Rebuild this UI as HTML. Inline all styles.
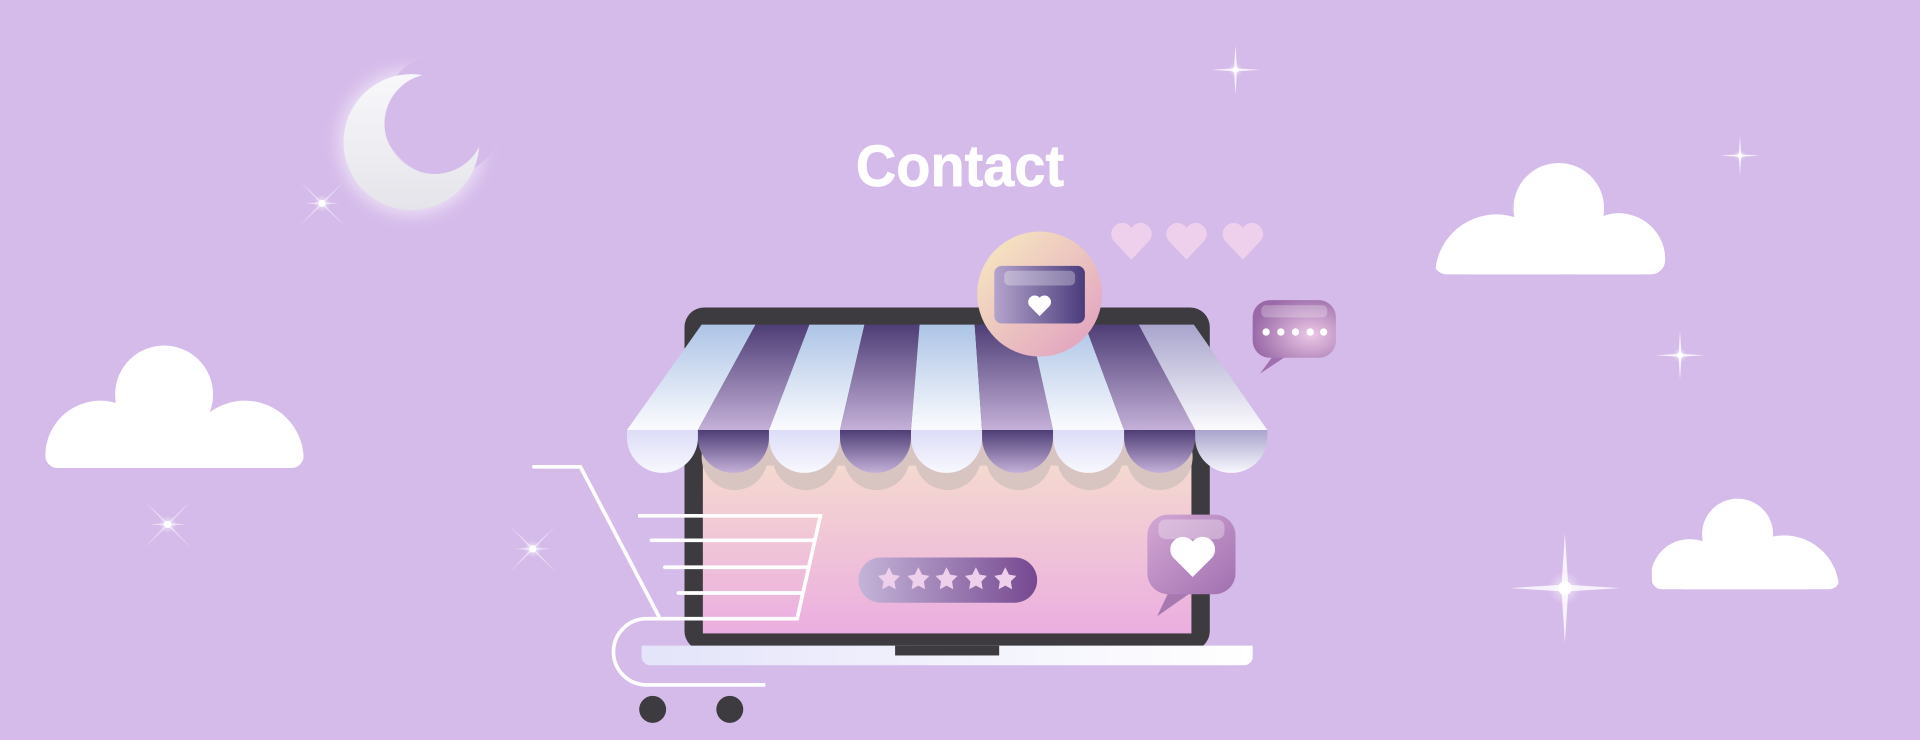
<!DOCTYPE html>
<html><head><meta charset="utf-8"><style>
html,body{margin:0;padding:0;background:#d5bbea;overflow:hidden}
svg{display:block}
</style></head><body>
<svg width="1920" height="740" viewBox="0 0 1568 604" preserveAspectRatio="none" xmlns="http://www.w3.org/2000/svg">
<defs>
<linearGradient id="lt" x1="0" y1="0" x2="0" y2="1"><stop offset="0" stop-color="#adc4e6"/><stop offset="1" stop-color="#fbfbfe"/></linearGradient>
<linearGradient id="lt2" x1="0" y1="0" x2="0" y2="1"><stop offset="0" stop-color="#a8a4cc"/><stop offset="1" stop-color="#fbfbfe"/></linearGradient>
<linearGradient id="dk" x1="0" y1="0" x2="0" y2="1"><stop offset="0" stop-color="#4e3e76"/><stop offset="1" stop-color="#c4b0d8"/></linearGradient>
<linearGradient id="ls" x1="0" y1="0" x2="0" y2="1"><stop offset="0" stop-color="#dcdcf8"/><stop offset="1" stop-color="#f8f8fe"/></linearGradient>
<linearGradient id="ls2" x1="0" y1="0" x2="0" y2="1"><stop offset="0" stop-color="#a8a4cc"/><stop offset="1" stop-color="#f8f8fe"/></linearGradient>
<linearGradient id="ds" x1="0" y1="0" x2="0" y2="1"><stop offset="0" stop-color="#4e3e76"/><stop offset="1" stop-color="#c4b0d8"/></linearGradient>
<linearGradient id="scr" x1="0" y1="0" x2="0" y2="1"><stop offset="0" stop-color="#f7e2cc"/><stop offset="1" stop-color="#ebaee0"/></linearGradient>
<linearGradient id="base" x1="0" y1="0" x2="1" y2="0"><stop offset="0" stop-color="#e4e4fa"/><stop offset="1" stop-color="#ffffff"/></linearGradient>
<linearGradient id="badge" x1="0" y1="0" x2="1" y2="1"><stop offset="0" stop-color="#f8ecc0"/><stop offset="1" stop-color="#e09cc0"/></linearGradient>
<linearGradient id="card" x1="0" y1="0" x2="1" y2="0"><stop offset="0" stop-color="#b4a4cc"/><stop offset="1" stop-color="#4a3c7c"/></linearGradient>
<linearGradient id="pill" x1="0" y1="0" x2="1" y2="0"><stop offset="0" stop-color="#c4b4d8"/><stop offset="1" stop-color="#764890"/></linearGradient>
<radialGradient id="bub" cx="0.7" cy="0.6" r="0.7"><stop offset="0" stop-color="#ecc8e6"/><stop offset="1" stop-color="#9a6aa8"/></radialGradient>
<linearGradient id="bub2" x1="0" y1="0" x2="1" y2="1"><stop offset="0" stop-color="#d4a8d4"/><stop offset="1" stop-color="#a070b0"/></linearGradient>
<linearGradient id="moon" x1="0" y1="0" x2="0" y2="1"><stop offset="0" stop-color="#f8f8fb"/><stop offset="1" stop-color="#e4e4ea"/></linearGradient>
<radialGradient id="glow"><stop offset="0" stop-color="#fff" stop-opacity="0.6"/><stop offset="1" stop-color="#fff" stop-opacity="0"/></radialGradient>
<filter id="bl"><feGaussianBlur stdDeviation="6"/></filter>
<mask id="mm"><rect width="1568" height="604" fill="#fff"/><circle cx="355" cy="101" r="41" fill="#000"/></mask>
<mask id="mg"><rect width="1568" height="604" fill="#fff"/><circle cx="362" cy="94" r="50" fill="#000"/></mask>
<clipPath id="c1"><rect x="37" y="250" width="211" height="132" rx="10"/></clipPath>
<clipPath id="c2"><rect x="1170" y="120" width="190" height="104" rx="12"/></clipPath>
<clipPath id="c3"><rect x="1349" y="400" width="153" height="81" rx="8"/></clipPath>
<symbol id="sp" viewBox="-20 -20 40 40"><circle r="6" fill="url(#glow)"/><path d="M0-20L1.2-1.2 20 0 1.2 1.2 0 20-1.2 1.2-20 0-1.2-1.2Z" fill="#fff" opacity="0.8"/><circle r="2.5" fill="#fff"/></symbol>
<symbol id="spx" viewBox="-20 -20 40 40"><circle r="6" fill="url(#glow)"/><path d="M-16-16L0-1 16-16 1 0 16 16 0 1-16 16-1 0Z" fill="#fff" opacity="0.45"/><path d="M-12 0L0-1 12 0 0 1Z" fill="#fff" opacity="0.5"/><circle r="2.5" fill="#fff"/></symbol>
</defs>
<rect width="1568" height="604" fill="#d5bbea"/>

<!-- moon -->
<circle cx="336" cy="116" r="60" fill="#fff" opacity="0.5" filter="url(#bl)" mask="url(#mg)"/>
<circle cx="336" cy="116" r="55.5" fill="url(#moon)" mask="url(#mm)"/>

<!-- sparkles -->
<use href="#spx" x="240" y="143" width="46" height="46"/>
<use href="#spx" x="113" y="404" width="48" height="48"/>
<use href="#spx" x="411" y="424" width="48" height="48"/>
<use href="#sp" x="989" y="37" width="40" height="40"/>
<use href="#sp" x="1405" y="111" width="32" height="32"/>
<use href="#sp" x="1352" y="270" width="40" height="40"/>
<use href="#sp" x="1233" y="435" width="90" height="90"/>

<!-- clouds -->
<g fill="#fff">
<g clip-path="url(#c1)"><circle cx="134" cy="322" r="40"/><circle cx="82" cy="372" r="45"/><circle cx="200" cy="375" r="48"/><rect x="70" y="355" width="160" height="30"/></g>
<g clip-path="url(#c2)"><circle cx="1273" cy="170" r="37"/><circle cx="1222" cy="225" r="50"/><circle cx="1322" cy="212" r="38"/><rect x="1200" y="198" width="140" height="30"/></g>
<g clip-path="url(#c3)"><circle cx="1419" cy="436" r="29"/><circle cx="1380" cy="472" r="32"/><circle cx="1457" cy="482" r="45"/><rect x="1375" y="462" width="100" height="22"/></g>
</g>

<!-- title -->
<text x="699" y="152" textLength="170" lengthAdjust="spacingAndGlyphs" font-family="Liberation Sans, sans-serif" font-weight="bold" font-size="48" fill="#fff" stroke="#fff" stroke-width="0.6">Contact</text>

<!-- hearts -->
<g fill="#efd0ec">
<path d="M924 212L909 196A8.5 8.5 0 0 1 924 186A8.5 8.5 0 0 1 939 196Z"/>
<path d="M969 212L954 196A8.5 8.5 0 0 1 969 186A8.5 8.5 0 0 1 984 196Z"/>
<path d="M1015 212L1000 196A8.5 8.5 0 0 1 1015 186A8.5 8.5 0 0 1 1030 196Z"/>
</g>

<!-- laptop -->
<rect x="559" y="251" width="429" height="280" rx="16" fill="#3d3b40"/>
<rect x="574" y="350" width="399" height="167" fill="url(#scr)"/>
<g fill="#d8c4c0">
<rect x="574" y="350" width="399" height="30"/>
<circle cx="600" cy="373" r="27"/><circle cx="658" cy="373" r="27"/><circle cx="716" cy="373" r="27"/><circle cx="774" cy="373" r="27"/><circle cx="832" cy="373" r="27"/><circle cx="890" cy="373" r="27"/><circle cx="947" cy="373" r="27"/>
</g>
<path d="M524 527H1023V536A7 7 0 0 1 1016 543H531A7 7 0 0 1 524 536Z" fill="url(#base)"/>
<rect x="731" y="527" width="85" height="8" fill="#3d3b40"/>

<!-- awning -->
<path d="M573 265L617 265 570 351 512 351Z" fill="url(#lt)"/>
<path d="M617 265L661 265 628 351 570 351Z" fill="url(#dk)"/>
<path d="M661 265L706 265 686 351 628 351Z" fill="url(#lt)"/>
<path d="M706 265L751 265 744 351 686 351Z" fill="url(#dk)"/>
<path d="M751 265L796 265 802 351 744 351Z" fill="url(#lt)"/>
<path d="M796 265L841 265 860 351 802 351Z" fill="url(#dk)"/>
<path d="M841 265L886 265 918 351 860 351Z" fill="url(#lt)"/>
<path d="M886 265L930 265 976 351 918 351Z" fill="url(#dk)"/>
<path d="M930 265L975 265 1035 351 976 351Z" fill="url(#lt2)"/>
<path d="M512 351H570V357A29 29 0 0 1 512 357Z" fill="url(#ls)"/>
<path d="M570 351H628V357A29 29 0 0 1 570 357Z" fill="url(#ds)"/>
<path d="M628 351H686V357A29 29 0 0 1 628 357Z" fill="url(#ls)"/>
<path d="M686 351H744V357A29 29 0 0 1 686 357Z" fill="url(#ds)"/>
<path d="M744 351H802V357A29 29 0 0 1 744 357Z" fill="url(#ls)"/>
<path d="M802 351H860V357A29 29 0 0 1 802 357Z" fill="url(#ds)"/>
<path d="M860 351H918V357A29 29 0 0 1 860 357Z" fill="url(#ls)"/>
<path d="M918 351H976V357A29 29 0 0 1 918 357Z" fill="url(#ds)"/>
<path d="M976 351H1035V357A29.5 29 0 0 1 976 357Z" fill="url(#ls2)"/>

<!-- badge -->
<circle cx="849" cy="240" r="51" fill="url(#badge)"/>
<rect x="812" y="217" width="74" height="47" rx="6" fill="url(#card)"/>
<rect x="820" y="221" width="58" height="12" rx="4" fill="#fff" opacity="0.3"/>
<path d="M849 258L841 250A4.5 4.5 0 0 1 849 243A4.5 4.5 0 0 1 857 250Z" fill="#fff"/>

<!-- chat bubble -->
<path d="M1040 290L1029 305 1050 291Z" fill="#a070b0"/>
<rect x="1023" y="245" width="68" height="47" rx="14" fill="url(#bub)"/>
<rect x="1030" y="249" width="54" height="10" rx="4" fill="#fff" opacity="0.25"/>
<g fill="#fff"><circle cx="1034" cy="271" r="3"/><circle cx="1046" cy="271" r="3"/><circle cx="1058" cy="271" r="3"/><circle cx="1070" cy="271" r="3"/><circle cx="1081" cy="271" r="3"/></g>

<!-- heart bubble -->
<path d="M955 482L945 503 975 482Z" fill="#a878b0"/>
<rect x="937" y="420" width="72" height="65" rx="17" fill="url(#bub2)"/>
<rect x="946" y="424" width="54" height="16" rx="6" fill="#fff" opacity="0.3"/>
<path d="M974 471L958 455A9.5 9.5 0 0 1 974 442A9.5 9.5 0 0 1 990 455Z" fill="#fff"/>

<!-- rating pill -->
<rect x="701" y="455" width="146" height="37" rx="18.5" fill="url(#pill)"/>
<g fill="#efd0ec">
<path id="st" d="M726 463L729 469 735 470 730.5 474.5 731.5 481 726 478 720.5 481 721.5 474.5 717 470 723 469Z"/>
<use href="#st" x="24"/><use href="#st" x="47"/><use href="#st" x="71"/><use href="#st" x="95"/>
</g>

<!-- cart -->
<g fill="none" stroke="#fff" stroke-width="3" stroke-linecap="round">
<path d="M436 381H474L538 503"/>
<path d="M521 421H670L651 505H528A27 27 0 0 0 528 559H625" stroke-linecap="butt"/>
<path d="M532 441H664M543 463H660M554 484H655"/>
</g>
<circle cx="533" cy="579" r="11" fill="#3d3b40"/>
<circle cx="596" cy="579" r="11" fill="#3d3b40"/>
</svg>
</body></html>
